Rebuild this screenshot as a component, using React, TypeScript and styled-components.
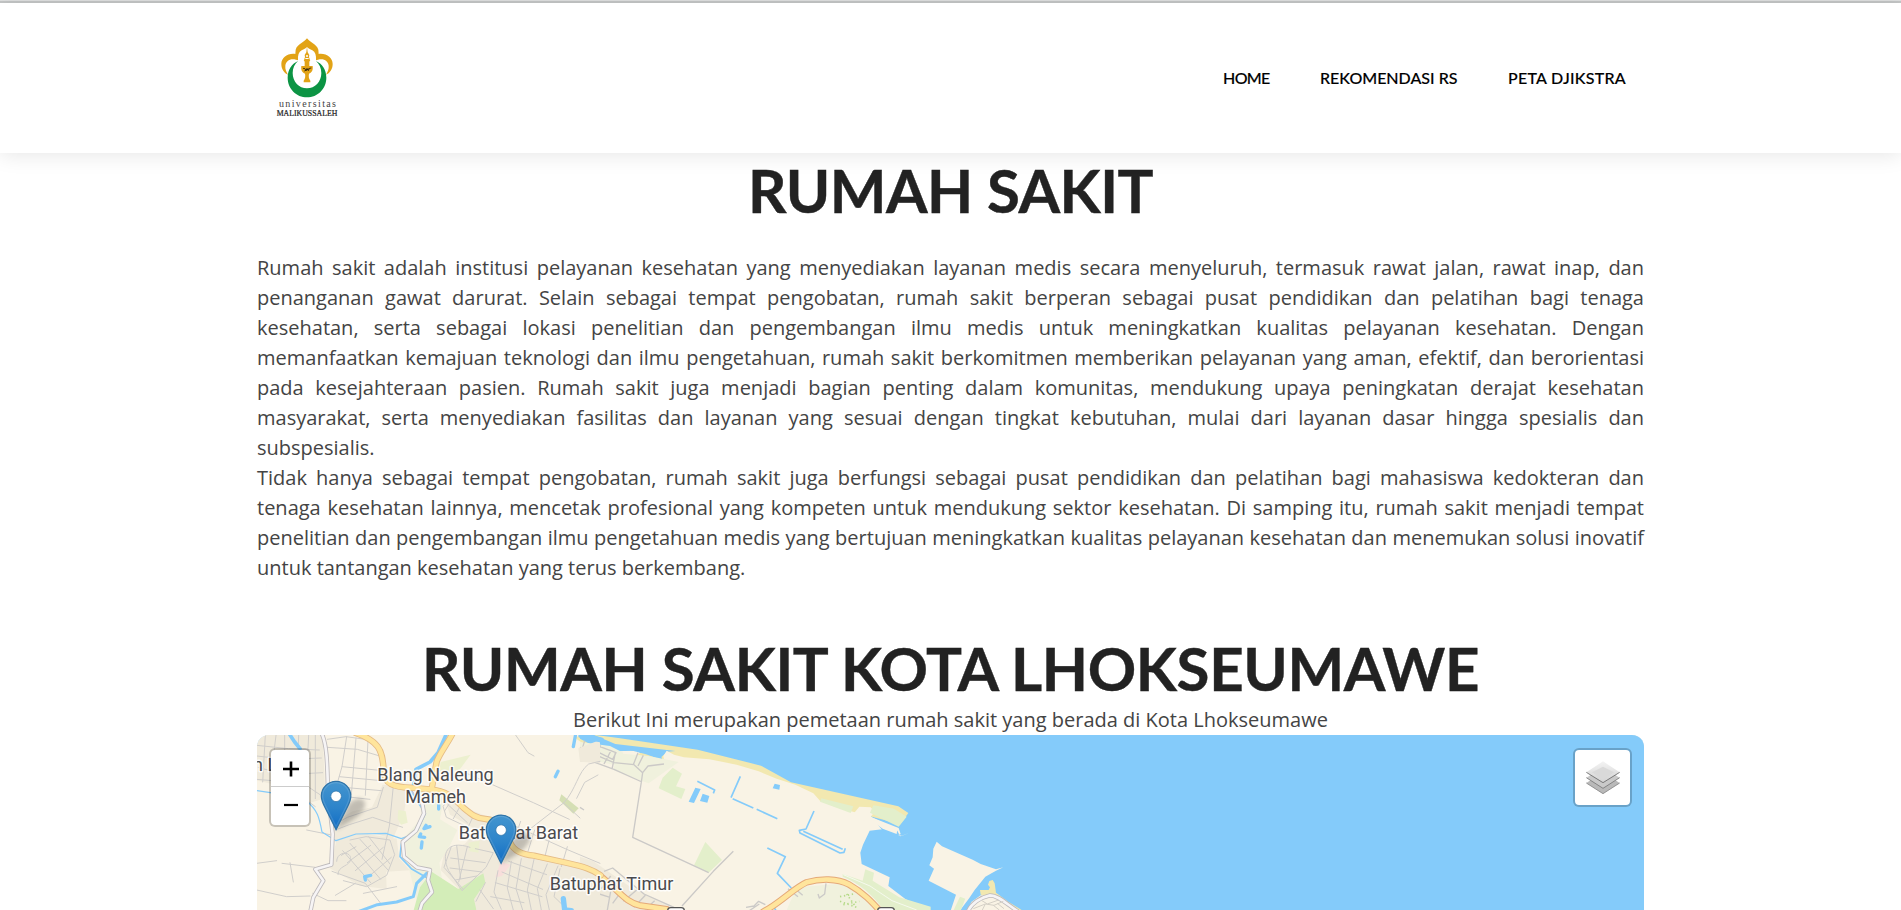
import React from "react";
import styled, { createGlobalStyle } from "styled-components";

const GlobalStyle = createGlobalStyle`
  *, *::before, *::after { box-sizing: border-box; }
  body { margin: 0; background: #fff; color: #444; font-family: "Open Sans", sans-serif; }
`;

const Page = styled.div`
  height: 100vh;
  overflow: hidden;
`;

const TopRule = styled.div`
  height: 3px;
  background: #c4c6c6;
  border-top: 1px solid #dfe0e0;
`;

const Header = styled.header`
  position: relative;
  height: 150px;
  background: #fff;
  box-shadow: 0 2px 20px rgba(0, 0, 0, 0.1);
`;

const Container = styled.div`
  width: 1387px;
  margin: 0 auto;
`;

const HeaderRow = styled(Container)`
  height: 100%;
  display: flex;
  align-items: center;
  justify-content: space-between;
  padding: 0 18px;
`;

const LogoArt = styled.svg`
  margin-top: 5px;
`;

const Nav = styled.nav`
  display: flex;
  gap: 50.5px;
`;

const NavLink = styled.a<{ $track: number }>`
  font: 500 16px/24px Lato, sans-serif;
  letter-spacing: ${(p) => p.$track}px;
  color: #000;
  -webkit-text-stroke: 0.15px #000;
  text-decoration: none;
  white-space: nowrap;
`;

const Title = styled.h1<{ $track: number }>`
  margin: 0;
  font: 700 60px/72px Lato, sans-serif;
  letter-spacing: ${(p) => p.$track}px;
  color: #222;
  -webkit-text-stroke: 0.4px #222;
  text-align: center;
  white-space: nowrap;
`;

const Intro = styled.section`
  padding-top: 1px;
`;

const Copy = styled.div`
  margin: 27px 0 49px;
`;

const Paragraph = styled.p`
  margin: 0;
  font-size: 20px;
  line-height: 30px;
  text-align: justify;
`;

const Subtitle = styled.p`
  margin: 1px 0 0;
  font-size: 20px;
  line-height: 30px;
  text-align: center;
`;

const MapFrame = styled.div`
  position: relative;
  height: 600px;
  border-radius: 12px;
  overflow: hidden;
  background: #84cbfa;
`;

const MapCanvas = styled.svg`
  display: block;
`;

const ZoomControl = styled.div`
  position: absolute;
  left: 12px;
  top: 13px;
  width: 42px;
  border: 2px solid rgba(0, 0, 0, 0.2);
  border-radius: 6px;
  background: #fff;
  background-clip: padding-box;
`;

const ZoomButton = styled.div`
  height: 36px;
  display: flex;
  align-items: center;
  justify-content: center;
  padding: 2px 0 0 1px;
  & + & {
    height: 39px;
    padding: 0 0 2px 1px;
    border-top: 1px solid #ccc;
  }
`;

const LayersControl = styled.div`
  position: absolute;
  right: 12px;
  top: 13px;
  width: 59px;
  height: 59px;
  display: flex;
  align-items: center;
  justify-content: center;
  border: 2px solid rgba(0, 0, 0, 0.2);
  border-radius: 6px;
  background: #fff;
  background-clip: padding-box;
`;

const MapLabel = styled.text`
  font: 400 18px Roboto, sans-serif;
  fill: #4a4a4e;
  stroke: #fff;
  stroke-opacity: 0.85;
  stroke-width: 3px;
  stroke-linejoin: round;
  paint-order: stroke;
  text-anchor: middle;
`;

const EdgeLabel = styled(MapLabel)`
  text-anchor: start;
`;

function Logo() {
  return (
    <LogoArt width="64" height="89" viewBox="105 107 192 267" aria-label="Universitas Malikussaleh">
      <path
        fill="#e2a316"
        d="M201 114c7 11 29 17 34 34l1 13c24-3 42 12 42 30 0 16-9 28-20 32 5-9 9-17 8-27-2-15-15-23-32-18l-6 2c1-15-2-25-11-30-7-4-12-5-16-10-4 5-9 6-16 10-9 5-12 15-11 30l-6-2c-17-5-30 3-32 18-1 10 3 18 8 27-11-4-20-16-20-32 0-18 18-33 42-30l1-13c5-17 27-23 34-34z"
      />
      <path
        fill="#0c9444"
        d="M174 182c-18 8-31 26-31 50 0 33 26 59 58 59s58-26 58-59c0-24-13-42-31-50 10 10 16 21 16 36 0 26-19 46-43 46s-43-20-43-46c0-15 6-26 16-36z"
      />
      <path fill="#e2a316" d="M201 139l2 17 5 8-1 6 3 10h-18l3-10-1-6 5-8z" />
      <path fill="#fff" d="M198 165h6v4h-6zM196 173h10v3h-10z" />
      <path
        fill="#e2a316"
        d="M191 179h20l-3 5v13h10c2 14-4 20-11 23-2 8 0 16 4 21v5h-20v-5c4-5 6-13 4-21-7-3-13-9-11-23h10v-13z"
      />
      <path d="M189 204l6 1 3 6 3-7 4 7 3-7 6-1M193 212l15-7" fill="none" stroke="#29210c" strokeWidth="2.5" />
      <text x="117" y="319" fontFamily="Liberation Serif, serif" fontSize="30" fill="#444" textLength="171" lengthAdjust="spacing">
        universitas
      </text>
      <text x="110" y="347" fontFamily="Liberation Serif, serif" fontSize="26" fill="#222" stroke="#222" strokeWidth=".7" textLength="182" lengthAdjust="spacingAndGlyphs">
        MALIKUSSALEH
      </text>
    </LogoArt>
  );
}

function LayersIcon() {
  return (
    <svg width="34" height="33" viewBox="0 0 102 99">
      <defs>
        <linearGradient id="sheet" x1="0" y1="0" x2="0" y2="1">
          <stop offset="0" stopColor="#f3f3f3" />
          <stop offset="1" stopColor="#d2d2d2" />
        </linearGradient>
      </defs>
      <path d="M1 66L51 33l50 33-50 32z" fill="#b9b9b9" />
      <path d="M1 66l50 32 50-32" fill="none" stroke="#858585" strokeWidth="2.5" />
      <path d="M1 50L51 18l50 32-50 32z" fill="#c9c9c9" />
      <path d="M1 50l50 32 50-32" fill="none" stroke="#777" strokeWidth="2.5" />
      <path d="M1 34L51 1l50 33-50 31z" fill="url(#sheet)" />
      <path d="M18 34l33-17 33 17-33 22z" fill="#d9d9d9" />
      <path d="M1 34l50 31 50-31" fill="none" stroke="#666" strokeWidth="2.5" />
    </svg>
  );
}

function Pin({ x, y }: { x: number; y: number }) {
  return (
    <g transform={`translate(${x} ${y}) scale(1.23)`}>
      <path d="M12 40L22 20C27 13 37 13 36 20 35 27 24 34 12 40z" fill="#333" opacity=".28" filter="url(#soft)" />
      <path
        d="M12.5.5C5.9.5.5 5.9.5 12.5c0 3 1.3 6 2.7 8.7l9.3 18.6 9.3-18.6c1.4-2.7 2.7-5.7 2.7-8.7C24.5 5.9 19.1.5 12.5.5z"
        fill="url(#pin)"
        stroke="#2e73a8"
      />
      <path
        d="M12.5 1.6C6.5 1.6 1.6 6.5 1.6 12.5c0 2.8 1.2 5.6 2.6 8.2l8.3 16.6 8.3-16.6c1.4-2.6 2.6-5.4 2.6-8.2C23.4 6.5 18.5 1.6 12.5 1.6z"
        fill="none"
        stroke="#fff"
        strokeOpacity=".13"
      />
      <circle cx="12.5" cy="12.7" r="4.3" fill="#fff" stroke="#2e73a8" strokeWidth=".6" />
    </g>
  );
}

const MAIN_ROAD_WEST =
  "M315 8C350 20 370 32 383 50 402 76 398 106 403 134 406 163 436 172 480 173L540 178C597 182 620 214 641 234 665 254 680 266 707 267 745 270 765 300 781 338 792 366 820 374 852 377L952 399C1000 410 1025 417 1052 436";
const BRANCH_ROAD = "M545 177L560 95C570 68 590 45 608 10";
const MAIN_ROAD_EAST = "M-5 410C50 420 65 442 97 469 130 500 148 520 182 527L260 538";
const COAST_ROAD = "M550 545C600 520 640 475 680 457 722 445 772 445 806 463 850 488 875 515 902 545";

function WestMap() {
  return (
    <g transform="translate(250 730) scale(.33333)" strokeLinejoin="round" strokeLinecap="round">
      {/* built-up areas and green land */}
      <g fill="#f0eadb">
        <path d="M20 15H218l8 190-60 18-60-52-86-20z" />
        <path d="M398 164l76 6-12 80-34 78-60-20-118 28-2-58 60-34 58-12z" />
        <path d="M262 320l90-8 88 14 8 60 32 35-72 4 2 52-80-10-90-52z" />
        <path d="M580 195l70 40 100 40 60 90 240 45v130H680l-60-70-48-50 12-60 60-18 40-40-84-48z" />
        <path d="M985 55l65-25v70l-60-5z" />
      </g>
      <path fill="#f0f1dd" d="M492 174l92 14-14 80 52 32-22 46-32 52 12 74-72 70-32-130-12-90 54-62z" />
      <path fill="#d3edb8" d="M545 425l80 52 75-47 6 28-34 50 8 36H490l20-72z" />
      <path fill="#ecf0cf" d="M445 240l22 4 6 34-20 6-10-18zM655 338l34-6-4 36-26-4zM572 96l90-22-34 46-60 4z" />
      <path fill="#d5dfb4" d="M934 193l52 42-16 16-42-40z" />
      <path fill="#f8dedb" d="M752 396l30 8-26 34-20 4z" />

      {/* minor streets */}
      <g fill="none" stroke="#d0cecb" strokeWidth="3">
        <path d="M20 46l96 10 92 4M20 78l90 10 104-4M24 112l80 22 114-6M20 148l94 8M46 16l-8 140M78 16l-10 80M104 16v118M146 16l-4 110M176 16l-4 80M196 16v190M120 134l90 60M116 170l80 60" />
        <path d="M232 28l56-8 58 8 46 28M290 20l-14 90-24 84M232 52l90 6 74 22M318 24l-14 170M354 30l-8 166M276 110l124 12M268 140l126 12M258 170l136 12M250 196l110 12M400 172l-18 60-90 30-44 24M430 168l-12 120-22 100" />
        <path d="M256 300l42-16 70-22 90 30M300 330l48-10 72 10 14 44-24 62-60 34-70-18M278 362l84 96M300 340l92 108M330 328l86 94M356 320l64 82M260 394c0-30 42-32 42-8s-40 20-38 48M318 350l-44 26M362 346l-70 52M400 352l-84 70M424 382l-80 68" />
        <path d="M650 130l200 88 108 50M844 294l98-76c36-40 42-92 74-116l34-8M940 218l50 46M980 205l24-48 40-22M796 14l38 54 18 10" />
        <path d="M580 228l30-34 62 60-18 38-64-30zM594 224l58 54M610 202l-26 40M636 218l-26 48M660 352c-70-24-88 20-64 70l40 60 72-70 22-44-54-12M604 350l-22 62 58 66M620 346l12 100M652 350l-26 106M602 384l104 14M600 414l96 12M616 450l64-12" />
        <path d="M744 422l-12 64 22 52M784 394l-12 80 18 66M814 386l-16 90 20 64M852 388l-20 92 12 60M892 402l-30 74 12 64M924 408l-36 86 10 46M736 458l140 42M756 426l122 52M776 394l114 40M706 458l-28 56M722 500l100 18M690 480l40 56M930 416l-18 84 42 40M790 286l160 72 100 42M812 274l-20 56M854 300l-20 64M900 320l-18 70M952 350l-18 60" />
        <path d="M96 400l100 12M80 392l-60 8M120 398l10 58M246 424l100 36 46 60M188 490l46 22 54 0M20 480l90 20 70-2M170 300l70 14M316 460l-60 36M340 490l100-20" />
      </g>

      {/* rivers and ponds */}
      <g fill="none" stroke="#84cbfa">
        <path strokeWidth="11" d="M118 12l16 24 16 20" />
        <path strokeWidth="11" d="M590 10l-26 58-24 28-42 22-8 52 8 16" />
        <path strokeWidth="5" d="M478 176l24 38 24 36-24 52-48 40-4 38 34 36 48 28" />
        <path strokeWidth="9" d="M530 430l-30 30-10 40-50 16-58 8-60 22" />
        <path strokeWidth="3.5" d="M20 182l56 8 90 20c38 30 42 54 50 96l42 26 60-20 90-2 46 16 20-8" />
        <path strokeWidth="10" d="M346 450l-2-10 18-4M566 225v12M512 312l-4 8 16 2M528 286l-6 10 18-6M516 336l-2 18M970 50l6-32M990 18l60 12M916 140l8-16" />
        <path strokeWidth="16" d="M940 506l4 34 20 2M1000 18l54 12" />
      </g>

      {/* secondary roads */}
      <g fill="none">
        <path d="M214 8c18 36 18 100 20 180l14 124-4 92-48 14 24 34-30 50-10 48" stroke="#bdb9bb" strokeWidth="13" />
        <path d="M214 8c18 36 18 100 20 180l14 124-4 92-48 14 24 34-30 50-10 48" stroke="#f6f4f5" strokeWidth="8" />
        <path d="M488 176l28 40 6 34-24 52-40 34 4 44 38 32 40 8-6 30 12 36-30 34-8 26" stroke="#bdb9bb" strokeWidth="13" />
        <path d="M488 176l28 40 6 34-24 52-40 34 4 44 38 32 40 8-6 30 12 36-30 34-8 26" stroke="#f6f4f5" strokeWidth="8" />
      </g>
      <g fill="none" stroke="#e5bb85" strokeWidth="19">
        <path d={MAIN_ROAD_WEST} />
        <path d={BRANCH_ROAD} />
      </g>
      <g fill="none" stroke="#ffe59c" strokeWidth="14">
        <path d={MAIN_ROAD_WEST} />
        <path d={BRANCH_ROAD} />
      </g>
    </g>
  );
}

function CoastMap() {
  return (
    <g transform="translate(580 730) scale(.33333)" strokeLinejoin="round">
      {/* sea with the harbour basin */}
      <path
        fill="#84cbfa"
        d="M0 10v14l30 10 40 20 30 10 68-2 42 20 40 10 8-12-14-6 14-10 30 12 4-2 54 12 250 68 110 55 150 30 50 60 58 18 24-8-26 10-43-23-50 6-20 42-8 24 4 34 84 40-4 26 52 40 80 44 120 26v12h2264V10z"
      />
      <path fill="#f2e8b0" d="M40 14l75 10 238 35 190 48 90 50 322 72 30 20-24 34-250-66-14 0-46-24-136-54-90-14-88-24-84 4-40-10-12-14-30-6 20-12-184-24-26-18z" />
      <path fill="#84cbfa" d="M0 20L40 14l66 28 180 21-24 2-18 16 4 10-50-18-46-12-84-4-44-18L0 26z" />
      <path
        fill="#f9f3e5"
        d="M250 78l10-16 22 12 30 8 28 2 48 4 82 16 66 20 54 22 56 18 54 26 20 22 100 40 18-22 34 2 12 14-12 14 80 38-2 14-42-16-36-26-50 4-22 40-6 28 6 20-30-10-500-160z"
      />
      <path fill="#e3efcb" d="M724 205l96 24-8 20-92-34zM880 226l62 10 38 24-24 30-86-42z" />
      <path fill="#f9f3e5" d="M870 260l86 34 6 18-4 2-6-12-84-36z" />

      {/* fields */}
      <path fill="#e3efcb" d="M278 113l28 18-18 38 28 8-12 30-68-32 12-32zM376 336l50 54-40 38-44-22zM788 432l60 20 8-34 26 10-4 24 80 50 94 28v12H912c-30-44-72-82-124-102zM636 540l18-26 44 10 22 18z" />
      <path fill="#f0f1dd" d="M0 36l90 12 40 20-14 40-116-26zM112 70l94 8 90 18-90 64-22-8-84-32zM650 472l150-12 60 50 30 30H620z" />
      <path fill="#f0eadb" d="M0 380l40 14 110 76 150 70H0z" />
      <g fill="none" stroke="#fff" strokeWidth="2">
        <path d="M790 434l80 34 66 44 74 28" />
      </g>
      <path d="M780 500l40-8M780 514l50 18M790 524l48-10M800 492l28 40" stroke="#b5da88" strokeWidth="5" strokeDasharray="4 8" fill="none" />

      {/* streets */}
      <g fill="none" stroke="#cbc9c7" strokeWidth="4">
        <path d="M0 92l36 2 66 24 84 38M188 128l-4 28-26 166 228 106M252 102l-48 6-16 20-26-24-60-6-66-28-36-18M14 32l-6 20M62 46l-26 48M50 46l58 22-10 20-48-24M94 60l-22 42M106 68l-10 50M174 68l-14 36M190 76l-16 32M460 364l-60 60-94 104M0 232l12 8" />
        <path d="M72 424l26-10 94 78 90 40M66 436l20 20M92 438l-28 38M20 480l70 22M24 500l-20 40M52 492l-26 48M92 484l-10 56M120 490l-22 30M0 510l60 20M170 480l-40 34M196 496l-34 36M120 438l-20 36M224 512l-28 26" />
        <path d="M738 460l-4 32-16 12-4-12M640 472l28 24M624 476l30 24M498 532l24-4 14-14 20 10M508 542l30-20" />
      </g>

      {/* canals and ponds */}
      <g fill="none" stroke="#84cbfa" strokeWidth="5">
        <path d="M352 154l52 26-4 10M481 139l-28 64M458 206l62 28M530 238l62 28M702 243l-24 54-20 4 2 8 120 60 12-2 4-12M670 304l118 54M562 354l54 26-24 50 42 44M582 532l6 10" />
      </g>
      <path fill="#84cbfa" d="M346 173l16 4-20 42-16-4zM368 191l20 7-6 20-22-5zM584 161l16 4-2 14-20-4z" />

      {/* highway */}
      <g fill="none" strokeLinecap="round">
        <g stroke="#e5a978" strokeWidth="20">
          <path d={MAIN_ROAD_EAST} />
          <path d={COAST_ROAD} />
        </g>
        <g stroke="#ffe59c" strokeWidth="14">
          <path d={MAIN_ROAD_EAST} />
          <path d={COAST_ROAD} />
        </g>
      </g>
      <g fill="#fff" stroke="#555" strokeWidth="4">
        <rect x="263" y="533" width="50" height="40" rx="9" />
        <rect x="893" y="533" width="50" height="40" rx="9" />
      </g>
    </g>
  );
}

function HarbourMap() {
  return (
    <g transform="translate(880 770) scale(.33333)">
      <path
        fill="#f9f3e5"
        d="M170 215l16 14 92 40 24 13 46 16 22-6-22 10-32 18-32 40-16 24-42 56h-20l22-66-82-42 16-36-14-10 10-24 2-26z"
      />
      <path fill="#e3efcb" d="M240 380l16 6-14 36h-22z" />
      <path fill="#f9f3e5" d="M262 424l12-28 28-20 30-5 20 6 60 46z" />
      <path fill="#f2e8b0" d="M328 333l10-3 6 10 4 28 38 28 42 26h-24l-58-40-44-8-2-14 26 0 4-8-6-8z" />
      <g fill="none" strokeLinejoin="round">
        <path d="M264 424c10-24 38-42 66-48 26 0 54 30 84 48" stroke="#bdb9bb" strokeWidth="13" />
        <path d="M264 424c10-24 38-42 66-48 26 0 54 30 84 48" stroke="#f6f4f5" strokeWidth="8" />
        <path d="M280 416l36-14 26 4 28-12M306 392l16 10 34-12M316 402l-10 20M340 406l18 14M352 400l20 16" stroke="#d5d0c6" strokeWidth="3" />
      </g>
    </g>
  );
}

function HospitalMap() {
  return (
    <MapCanvas width="1387" height="175" viewBox="257 735 1387 175">
      <defs>
        <linearGradient id="pin" x1="0" y1="0" x2="0" y2="1">
          <stop offset="0" stopColor="#4395cf" />
          <stop offset=".55" stopColor="#2d84ca" />
          <stop offset="1" stopColor="#106cc5" />
        </linearGradient>
        <filter id="soft" x="-30%" y="-30%" width="160%" height="160%">
          <feGaussianBlur stdDeviation="1.7" />
        </filter>
      </defs>
      <rect x="257" y="735" width="1387" height="175" fill="#f9f3e5" />
      <CoastMap />
      <WestMap />
      <HarbourMap />
      <EdgeLabel x="253" y="771">n L</EdgeLabel>
      <MapLabel x="435.5" y="780.5">Blang Naleung</MapLabel>
      <MapLabel x="435.5" y="803">Mameh</MapLabel>
      <MapLabel x="518.5" y="838.5">Batuphat Barat</MapLabel>
      <MapLabel x="611.5" y="890">Batuphat Timur</MapLabel>
      <Pin x={320.7} y={780.7} />
      <Pin x={485.7} y={814.5} />
    </MapCanvas>
  );
}

export default function App() {
  return (
    <>
      <GlobalStyle />
      <Page>
        <TopRule />
        <Header>
          <HeaderRow>
            <Logo />
            <Nav>
              <NavLink $track={-0.7}>HOME</NavLink>
              <NavLink $track={0}>REKOMENDASI RS</NavLink>
              <NavLink $track={0.27}>PETA DJIKSTRA</NavLink>
            </Nav>
          </HeaderRow>
        </Header>
        <Container as="main">
          <Intro>
            <Title $track={-0.5}>RUMAH SAKIT</Title>
            <Copy>
              <Paragraph>
                Rumah sakit adalah institusi pelayanan kesehatan yang menyediakan layanan medis secara menyeluruh,
                termasuk rawat jalan, rawat inap, dan penanganan gawat darurat. Selain sebagai tempat pengobatan, rumah
                sakit berperan sebagai pusat pendidikan dan pelatihan bagi tenaga kesehatan, serta sebagai lokasi
                penelitian dan pengembangan ilmu medis untuk meningkatkan kualitas pelayanan kesehatan. Dengan
                memanfaatkan kemajuan teknologi dan ilmu pengetahuan, rumah sakit berkomitmen memberikan pelayanan yang
                aman, efektif, dan berorientasi pada kesejahteraan pasien. Rumah sakit juga menjadi bagian penting dalam
                komunitas, mendukung upaya peningkatan derajat kesehatan masyarakat, serta menyediakan fasilitas dan
                layanan yang sesuai dengan tingkat kebutuhan, mulai dari layanan dasar hingga spesialis dan
                subspesialis.
              </Paragraph>
              <Paragraph>
                Tidak hanya sebagai tempat pengobatan, rumah sakit juga berfungsi sebagai pusat pendidikan dan pelatihan
                bagi mahasiswa kedokteran dan tenaga kesehatan lainnya, mencetak profesional yang kompeten untuk
                mendukung sektor kesehatan. Di samping itu, rumah sakit menjadi tempat penelitian dan pengembangan ilmu
                pengetahuan medis yang bertujuan meningkatkan kualitas pelayanan kesehatan dan menemukan solusi inovatif
                untuk tantangan kesehatan yang terus berkembang.
              </Paragraph>
            </Copy>
          </Intro>
          <section>
            <Title as="h2" $track={-0.36}>RUMAH SAKIT KOTA LHOKSEUMAWE</Title>
            <Subtitle>Berikut Ini merupakan pemetaan rumah sakit yang berada di Kota Lhokseumawe</Subtitle>
            <MapFrame>
              <HospitalMap />
              <ZoomControl>
                <ZoomButton>
                  <svg width="16" height="16" viewBox="0 0 16 16" stroke="#000" strokeWidth="2.6">
                    <path d="M0 8h16M8 .5v15" />
                  </svg>
                </ZoomButton>
                <ZoomButton>
                  <svg width="14" height="16" viewBox="0 0 14 16" stroke="#000" strokeWidth="2.2">
                    <path d="M0 8h14" />
                  </svg>
                </ZoomButton>
              </ZoomControl>
              <LayersControl>
                <LayersIcon />
              </LayersControl>
            </MapFrame>
          </section>
        </Container>
      </Page>
    </>
  );
}
